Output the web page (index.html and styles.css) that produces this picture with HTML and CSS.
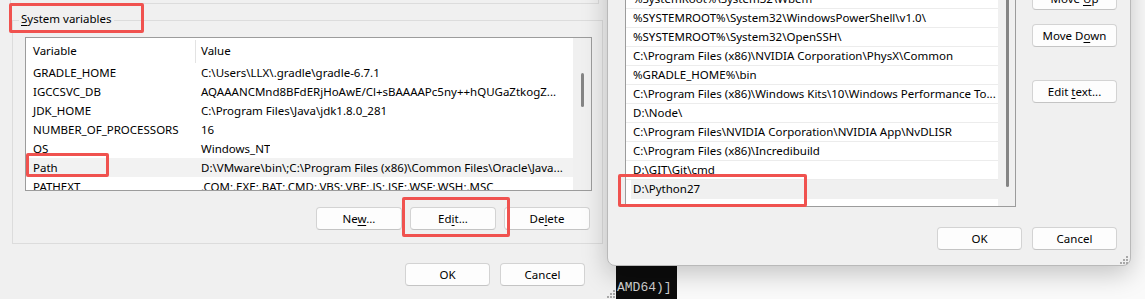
FILE: index.html
```html
<!DOCTYPE html>
<html lang="en">
<head>
    <meta charset="UTF-8">
    <title>Environment Variables</title>
    <link rel="stylesheet" href="styles.css">
</head>
<body>
<div class="desktop">

    <!-- Environment Variables dialog (behind) -->
    <div class="env-dialog">
        <div class="user-group-end"></div>

        <div class="group">
            <span class="group-title"><u>S</u>ystem variables</span>
            <div class="listview">
                <div class="lv-main">
                    <div class="lv-header">
                        <span class="col-var">Variable</span>
                        <span class="col-val">Value</span>
                    </div>
                    <div class="lv-row"><span class="col-var">GRADLE_HOME</span><span class="col-val">C:\Users\LLX\.gradle\gradle-6.7.1</span></div>
                    <div class="lv-row"><span class="col-var">IGCCSVC_DB</span><span class="col-val">AQAAANCMnd8BFdERjHoAwE/Cl+sBAAAAPc5ny++hQUGaZtkogZ...</span></div>
                    <div class="lv-row"><span class="col-var">JDK_HOME</span><span class="col-val">C:\Program Files\Java\jdk1.8.0_281</span></div>
                    <div class="lv-row"><span class="col-var">NUMBER_OF_PROCESSORS</span><span class="col-val">16</span></div>
                    <div class="lv-row"><span class="col-var">OS</span><span class="col-val">Windows_NT</span></div>
                    <div class="lv-row selected"><span class="col-var">Path</span><span class="col-val">D:\VMware\bin\;C:\Program Files (x86)\Common Files\Oracle\Java...</span></div>
                    <div class="lv-row"><span class="col-var">PATHEXT</span><span class="col-val">.COM;.EXE;.BAT;.CMD;.VBS;.VBE;.JS;.JSE;.WSF;.WSH;.MSC</span></div>
                </div>
                <div class="scrollbar">
                    <div class="thumb thumb-short"></div>
                </div>
            </div>

            <div class="btn-row">
                <button class="btn">Ne<u>w</u>...</button>
                <button class="btn">Ed<u>i</u>t...</button>
                <button class="btn">De<u>l</u>ete</button>
            </div>
        </div>

        <div class="dlg-footer">
            <button class="btn">OK</button>
            <button class="btn">Cancel</button>
        </div>

        <svg class="grip" width="9" height="9" viewBox="0 0 9 9">
            <rect x="7" y="1" width="2" height="2"/>
            <rect x="4" y="4" width="2" height="2"/>
            <rect x="7" y="4" width="2" height="2"/>
            <rect x="1" y="7" width="2" height="2"/>
            <rect x="4" y="7" width="2" height="2"/>
            <rect x="7" y="7" width="2" height="2"/>
        </svg>
    </div>

    <!-- console window peeking out underneath -->
    <div class="console">AMD64)]</div>

    <!-- Edit environment variable dialog (front) -->
    <div class="edit-dialog">
        <div class="edit-top">
            <div class="pathlist">
                <div class="pathlist-items">
                    <div class="path-row">%SystemRoot%\System32\Wbem</div>
                    <div class="path-row">%SYSTEMROOT%\System32\WindowsPowerShell\v1.0\</div>
                    <div class="path-row">%SYSTEMROOT%\System32\OpenSSH\</div>
                    <div class="path-row">C:\Program Files (x86)\NVIDIA Corporation\PhysX\Common</div>
                    <div class="path-row">%GRADLE_HOME%\bin</div>
                    <div class="path-row">C:\Program Files (x86)\Windows Kits\10\Windows Performance To...</div>
                    <div class="path-row">D:\Node\</div>
                    <div class="path-row">C:\Program Files\NVIDIA Corporation\NVIDIA App\NvDLISR</div>
                    <div class="path-row">C:\Program Files (x86)\Incredibuild</div>
                    <div class="path-row">D:\GIT\Git\cmd</div>
                    <div class="path-row selected">D:\Python27</div>
                </div>
                <div class="scrollbar">
                    <div class="thumb thumb-long"></div>
                </div>
            </div>

            <div class="side-btns">
                <button class="btn btn-up">Move <u>U</u>p</button>
                <button class="btn btn-down">Move D<u>o</u>wn</button>
                <button class="btn btn-text">Edit <u>t</u>ext...</button>
            </div>
        </div>

        <div class="edit-footer">
            <button class="btn">OK</button>
            <button class="btn">Cancel</button>
        </div>

        <svg class="grip grip-edit" width="9" height="9" viewBox="0 0 9 9">
            <rect x="7" y="1" width="2" height="2"/>
            <rect x="4" y="4" width="2" height="2"/>
            <rect x="7" y="4" width="2" height="2"/>
            <rect x="1" y="7" width="2" height="2"/>
            <rect x="4" y="7" width="2" height="2"/>
            <rect x="7" y="7" width="2" height="2"/>
        </svg>
    </div>

    <!-- red annotation boxes -->
    <div class="mark mark-sys"></div>
    <div class="mark mark-path"></div>
    <div class="mark mark-edit"></div>
    <div class="mark mark-py"></div>
</div>
</body>
</html>
```

FILE: styles.css
```css
/* Page */
body {
    margin: 0;
    background: #fafafa;
    font-family: "Noto Sans", Arial, sans-serif;
    font-size: 11.5px;
    color: #000;
}

.desktop {
    position: relative;
    width: 1145px;
    height: 299px;
    overflow: hidden;
}

u {
    text-underline-offset: 2px;
}

/* Buttons */
.btn {
    height: 23px;
    width: 86px;
    padding: 0;
    background: #fdfdfd;
    border: 1px solid #d3d3d3;
    border-bottom-color: #c4c4c4;
    border-radius: 4px;
    font-family: inherit;
    font-size: 11.5px;
    color: #000;
}

/* Environment Variables dialog */
.env-dialog {
    position: relative;
    width: 616px;
    height: 299px;
    background: #f0f0f0;
}

.user-group-end {
    box-sizing: border-box;
    margin-left: 10px;
    width: 589px;
    height: 4px;
    border: 1px solid #dcdcdc;
    border-top: none;
}

.group {
    box-sizing: border-box;
    margin: 16px 0 0 12px;
    width: 591px;
    height: 224px;
    border: 1px solid #dcdcdc;
}

.group-title {
    display: block;
    width: max-content;
    margin: -10px 0 0 6px;
    padding: 0 2px;
    line-height: 16px;
    background: #f0f0f0;
}

/* List view */
.listview {
    box-sizing: border-box;
    display: flex;
    margin: 10px 0 0 12px;
    width: 567px;
    height: 154px;
    border: 1px solid #9c9c9c;
    background: #fff;
}

.lv-main {
    width: 547px;
    overflow: hidden;
}

.lv-header {
    display: flex;
    height: 25px;
    line-height: 25px;
}

.lv-header .col-val {
    border-left: 1px solid #e3e3e3;
    padding-left: 5px;
    margin-top: 2px;
    line-height: 21px;
}

.lv-row {
    display: flex;
    height: 19px;
    line-height: 19px;
    white-space: nowrap;
}

.lv-row.selected {
    background: #f2f2f2;
}

.col-var {
    box-sizing: border-box;
    flex: none;
    width: 169px;
    padding-left: 7px;
}

.col-val {
    padding-left: 6px;
    overflow: hidden;
    white-space: nowrap;
}

.scrollbar {
    position: relative;
    flex: none;
    width: 18px;
    background: #f0f0f0;
}

.thumb {
    position: absolute;
    left: 8px;
    width: 3px;
    border-radius: 2px;
    background: #858585;
}

.thumb-short {
    top: 35px;
    height: 34px;
}

.thumb-long {
    top: 0;
    height: 197px;
}

.btn-row {
    display: flex;
    justify-content: flex-end;
    gap: 8px;
    margin: 16px 12px 0 0;
}

.dlg-footer {
    display: flex;
    justify-content: flex-end;
    gap: 10px;
    margin-top: 19px;
    padding-right: 31px;
}

.dlg-footer .btn,
.edit-footer .btn {
    width: 85px;
}

.grip {
    position: absolute;
    right: 1px;
    bottom: 1px;
    fill: #a8a8a8;
}

/* Console behind */
.console {
    position: absolute;
    left: 616px;
    top: 266px;
    width: 61px;
    height: 33px;
    padding: 14px 0 0 1px;
    box-sizing: border-box;
    background: #0c0c0c;
    color: #d0d0d0;
    font-family: "Liberation Mono", monospace;
    font-size: 13px;
    line-height: 16px;
}

/* Edit environment variable dialog */
.edit-dialog {
    position: absolute;
    left: 607px;
    top: -40px;
    box-sizing: border-box;
    width: 524px;
    height: 306px;
    padding: 28px 13px 0 17px;
    background: #f0f0f0;
    border: 1px solid #b9b9b9;
    border-radius: 8px;
    box-shadow: 0 8px 26px rgba(0, 0, 0, 0.22);
}

.edit-top {
    display: flex;
    gap: 16px;
}

.pathlist {
    box-sizing: border-box;
    display: flex;
    width: 391px;
    height: 218px;
    border: 1px solid #9c9c9c;
    background: #fff;
}

.pathlist-items {
    width: 372px;
    overflow: hidden;
}

.path-row {
    box-sizing: border-box;
    height: 19px;
    line-height: 18px;
    padding-left: 7px;
    border-bottom: 1px solid #ececec;
    white-space: nowrap;
    overflow: hidden;
}

.path-row.selected {
    margin-left: 5px;
    padding-left: 2px;
    border-bottom: none;
    background: #f0f0f0;
}

.pathlist .scrollbar {
    width: 17px;
}

.side-btns {
    display: flex;
    flex-direction: column;
}

.side-btns .btn {
    width: 85px;
}

.btn-up {
    margin-top: -2px;
}

.btn-down {
    margin-top: 14px;
}

.btn-text {
    margin-top: 33px;
}

.edit-footer {
    display: flex;
    justify-content: flex-end;
    gap: 10px;
    margin-top: 20px;
}

.grip-edit {
    right: 2px;
    bottom: 1px;
}

/* Annotation boxes */
.mark {
    position: absolute;
    box-sizing: border-box;
    border: 3px solid #f0524f;
    border-radius: 2px;
}

.mark-sys {
    left: 9px;
    top: 3px;
    width: 135px;
    height: 30px;
}

.mark-path {
    left: 26px;
    top: 153px;
    width: 83px;
    height: 24px;
}

.mark-edit {
    left: 402px;
    top: 197px;
    width: 108px;
    height: 40px;
}

.mark-py {
    left: 618px;
    top: 174px;
    width: 189px;
    height: 33px;
}
```
